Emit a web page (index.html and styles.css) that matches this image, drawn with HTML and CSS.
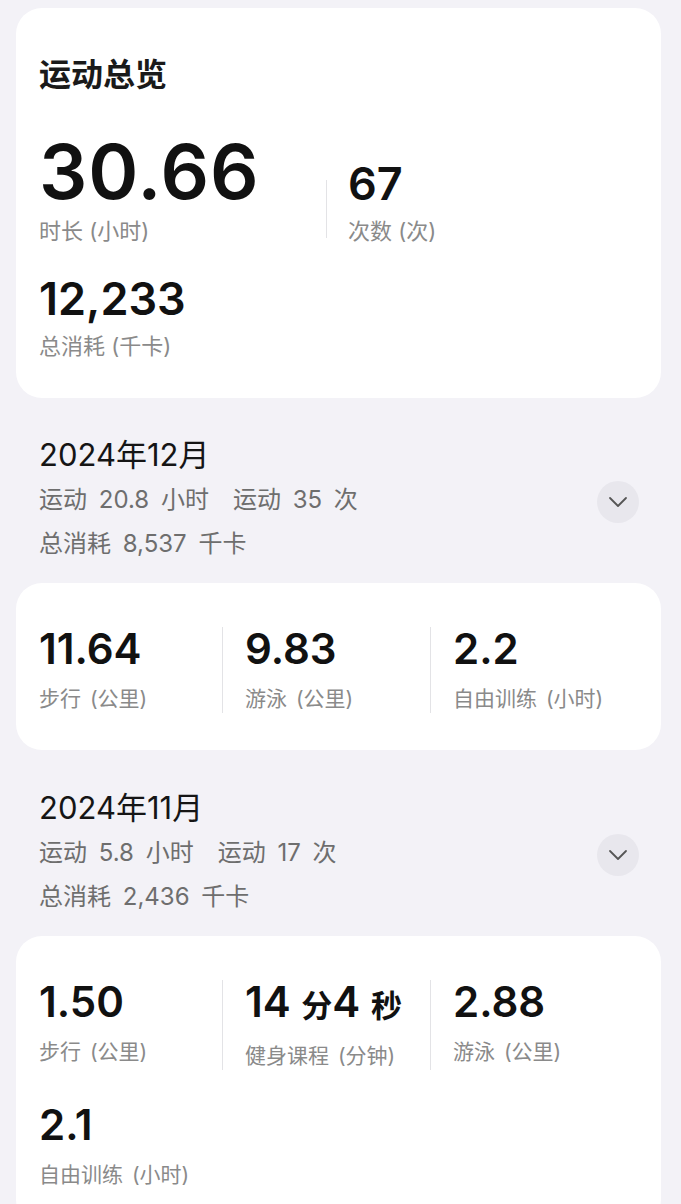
FILE: index.html
```html
<!DOCTYPE html>
<html lang="zh-CN">
<head>
    <meta charset="UTF-8">
    <meta name="viewport" content="width=device-width, initial-scale=1.0">
    <title>运动总览</title>
    <link rel="stylesheet" href="styles.css">
</head>
<body>
    <main class="page">
        <!-- Overall summary -->
        <section class="card overview">
            <h2 class="overview-title">运动总览</h2>
            <div class="overview-row">
                <div class="stat stat-big">
                    <div class="value">30.66</div>
                    <div class="label">时长 (小时)</div>
                </div>
                <div class="divider"></div>
                <div class="stat">
                    <div class="value">67</div>
                    <div class="label">次数 (次)</div>
                </div>
            </div>
            <div class="stat stat-kcal">
                <div class="value">12,233</div>
                <div class="label">总消耗 (千卡)</div>
            </div>
        </section>

        <!-- December -->
        <section class="month">
            <div class="month-head">
                <div>
                    <h3 class="month-title">2024年12月</h3>
                    <p class="month-line"><span class="gap">运动 20.8 小时</span><span>运动 35 次</span></p>
                    <p class="month-line">总消耗 8,537 千卡</p>
                </div>
                <button class="toggle" aria-label="展开">
                    <svg width="20" height="12" viewBox="0 0 20 12"><path d="M2 2l8 8 8-8" fill="none" stroke="#555" stroke-width="1.8" stroke-linecap="round" stroke-linejoin="round"/></svg>
                </button>
            </div>
            <div class="card grid">
                <div class="cell">
                    <div class="value">11.64</div>
                    <div class="label">步行 (公里)</div>
                </div>
                <div class="cell">
                    <div class="value">9.83</div>
                    <div class="label">游泳 (公里)</div>
                </div>
                <div class="cell">
                    <div class="value">2.2</div>
                    <div class="label">自由训练 (小时)</div>
                </div>
            </div>
        </section>

        <!-- November -->
        <section class="month">
            <div class="month-head">
                <div>
                    <h3 class="month-title">2024年11月</h3>
                    <p class="month-line"><span class="gap">运动 5.8 小时</span><span>运动 17 次</span></p>
                    <p class="month-line">总消耗 2,436 千卡</p>
                </div>
                <button class="toggle" aria-label="展开">
                    <svg width="20" height="12" viewBox="0 0 20 12"><path d="M2 2l8 8 8-8" fill="none" stroke="#555" stroke-width="1.8" stroke-linecap="round" stroke-linejoin="round"/></svg>
                </button>
            </div>
            <div class="card grid">
                <div class="cell">
                    <div class="value">1.50</div>
                    <div class="label">步行 (公里)</div>
                </div>
                <div class="cell">
                    <div class="value">14 <span class="unit">分</span>4 <span class="unit">秒</span></div>
                    <div class="label">健身课程 (分钟)</div>
                </div>
                <div class="cell">
                    <div class="value">2.88</div>
                    <div class="label">游泳 (公里)</div>
                </div>
                <div class="cell">
                    <div class="value">2.1</div>
                    <div class="label">自由训练 (小时)</div>
                </div>
            </div>
        </section>
    </main>
</body>
</html>
```

FILE: styles.css
```css
body {
    margin: 0;
    background: #f3f2f7;
    font-family: Inter, "Noto Sans CJK SC", sans-serif;
    color: #111;
}
.page {
    padding: 8px 20px 0 16px;
}
.card {
    background: #fff;
    border-radius: 26px;
}
.overview {
    padding: 47px 23px 38px;
}
.overview-title {
    margin: 0;
    font-size: 32px;
    line-height: 40px;
    font-weight: 700;
    color: #1a1a1a;
}
.overview-row {
    display: flex;
    align-items: flex-end;
    margin-top: 38px;
}
.value {
    font-size: 45px;
    line-height: 44px;
    font-weight: 600;
}
.label {
    margin-top: 11px;
    font-size: 22px;
    line-height: 28px;
    color: #8a8a8a;
}
.stat-big {
    flex: 0 0 287px;
}
.stat-big .value {
    font-size: 76px;
    line-height: 76px;
    font-weight: 600;
    letter-spacing: 1px;
}
.stat-big .label {
    margin-top: 8px;
}
.divider {
    width: 1px;
    height: 58px;
    margin: 0 21px 7px 0;
    background: #e3e3e6;
}
.stat-kcal {
    margin-top: 32px;
}
.month {
    margin-top: 39px;
}
.month + .month {
    margin-top: 40px;
}
.month-head {
    display: flex;
    justify-content: space-between;
    align-items: center;
    padding: 0 22px 0 23px;
}
.month-title {
    margin: 0;
    font-size: 31px;
    line-height: 36px;
    font-weight: 400;
    color: #151515;
}
.month-line {
    margin: 0;
    font-size: 24px;
    line-height: 44px;
    word-spacing: 5px;
    color: #6e6e6e;
}
.month-title + .month-line {
    margin-top: 5px;
}
.gap {
    margin-right: 24px;
}
.toggle {
    width: 42px;
    height: 42px;
    border: none;
    border-radius: 50%;
    background: #e8e7ed;
    display: flex;
    align-items: center;
    justify-content: center;
    padding: 0;
    cursor: pointer;
}
.grid {
    display: grid;
    grid-template-columns: 206px 208px 1fr;
    row-gap: 33px;
    margin-top: 17px;
    padding: 44px 0 37px;
}
.cell {
    padding-left: 23px;
}
.cell:not(:nth-child(3n+1)) {
    border-left: 1px solid #e3e3e6;
    padding-left: 22px;
}
.cell .value {
    font-size: 42px;
}
.cell .label {
    margin-top: 14px;
    font-size: 21px;
    word-spacing: 3px;
}
.unit {
    font-size: 31px;
    font-weight: 700;
}
```
